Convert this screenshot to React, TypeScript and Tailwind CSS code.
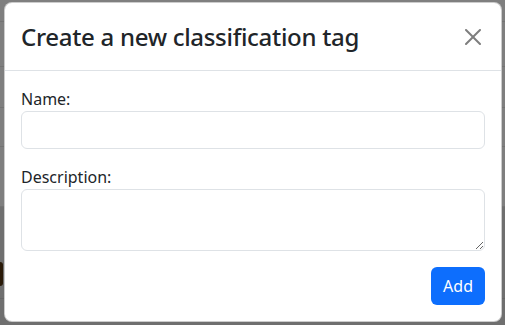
const ROWS = [22, 45, 41, 39, 60];

function CloseIcon() {
  return (
    <svg viewBox="0 0 16 16" className="h-4 w-4" fill="#000">
      <path d="M.293.293a1 1 0 0 1 1.414 0L8 6.586 14.293.293a1 1 0 1 1 1.414 1.414L9.414 8l6.293 6.293a1 1 0 0 1-1.414 1.414L8 9.414l-6.293 6.293a1 1 0 0 1-1.414-1.414L6.586 8 .293 1.707a1 1 0 0 1 0-1.414z" />
    </svg>
  );
}

export default function App() {
  return (
    <div className="relative h-[325px] w-[505px] overflow-hidden bg-[#6f6f6f] font-['Noto_Sans',sans-serif]">
      {/* page behind the backdrop */}
      <div className="bg-[#7f7f7f]">
        {ROWS.map((h, i) => (
          <div key={i} style={{ height: h }} className="border-b border-[#737373]" />
        ))}
      </div>
      <div className="mt-[55px] h-[24px] w-[3px] rounded-r-sm bg-[#2a1a08]" />
      <div className="mt-[12px] border-b border-[#666]" />

      {/* modal */}
      <div className="absolute inset-0 pl-[4px] pt-[2px]">
        <div className="w-[498px] rounded-[8px] border border-black/20 bg-white text-[#212529]">
          <div className="flex items-center justify-between border-b border-[#dee2e6] px-4 pt-4 pb-[15px]">
            <h4 className="text-[24px] font-medium leading-[36px] tracking-[-0.3px]">
              Create a new classification tag
            </h4>
            <button type="button" className="p-1 opacity-50">
              <CloseIcon />
            </button>
          </div>

          <div className="p-4">
            <label className="block text-[16px] leading-6">Name:</label>
            <input
              type="text"
              className="block h-[38px] w-full rounded-[6px] border border-[#dee2e6] px-3"
            />
            <label className="mt-4 block text-[16px] leading-6">Description:</label>
            <textarea className="block h-[62px] w-full rounded-[6px] border border-[#dee2e6] px-3 py-1.5" />
            <div className="mt-4 flex justify-end">
              <button
                type="button"
                className="h-[38px] rounded-[6px] bg-[#0d6efd] px-3 text-[16px] text-white"
              >
                Add
              </button>
            </div>
          </div>
        </div>
      </div>
    </div>
  );
}
